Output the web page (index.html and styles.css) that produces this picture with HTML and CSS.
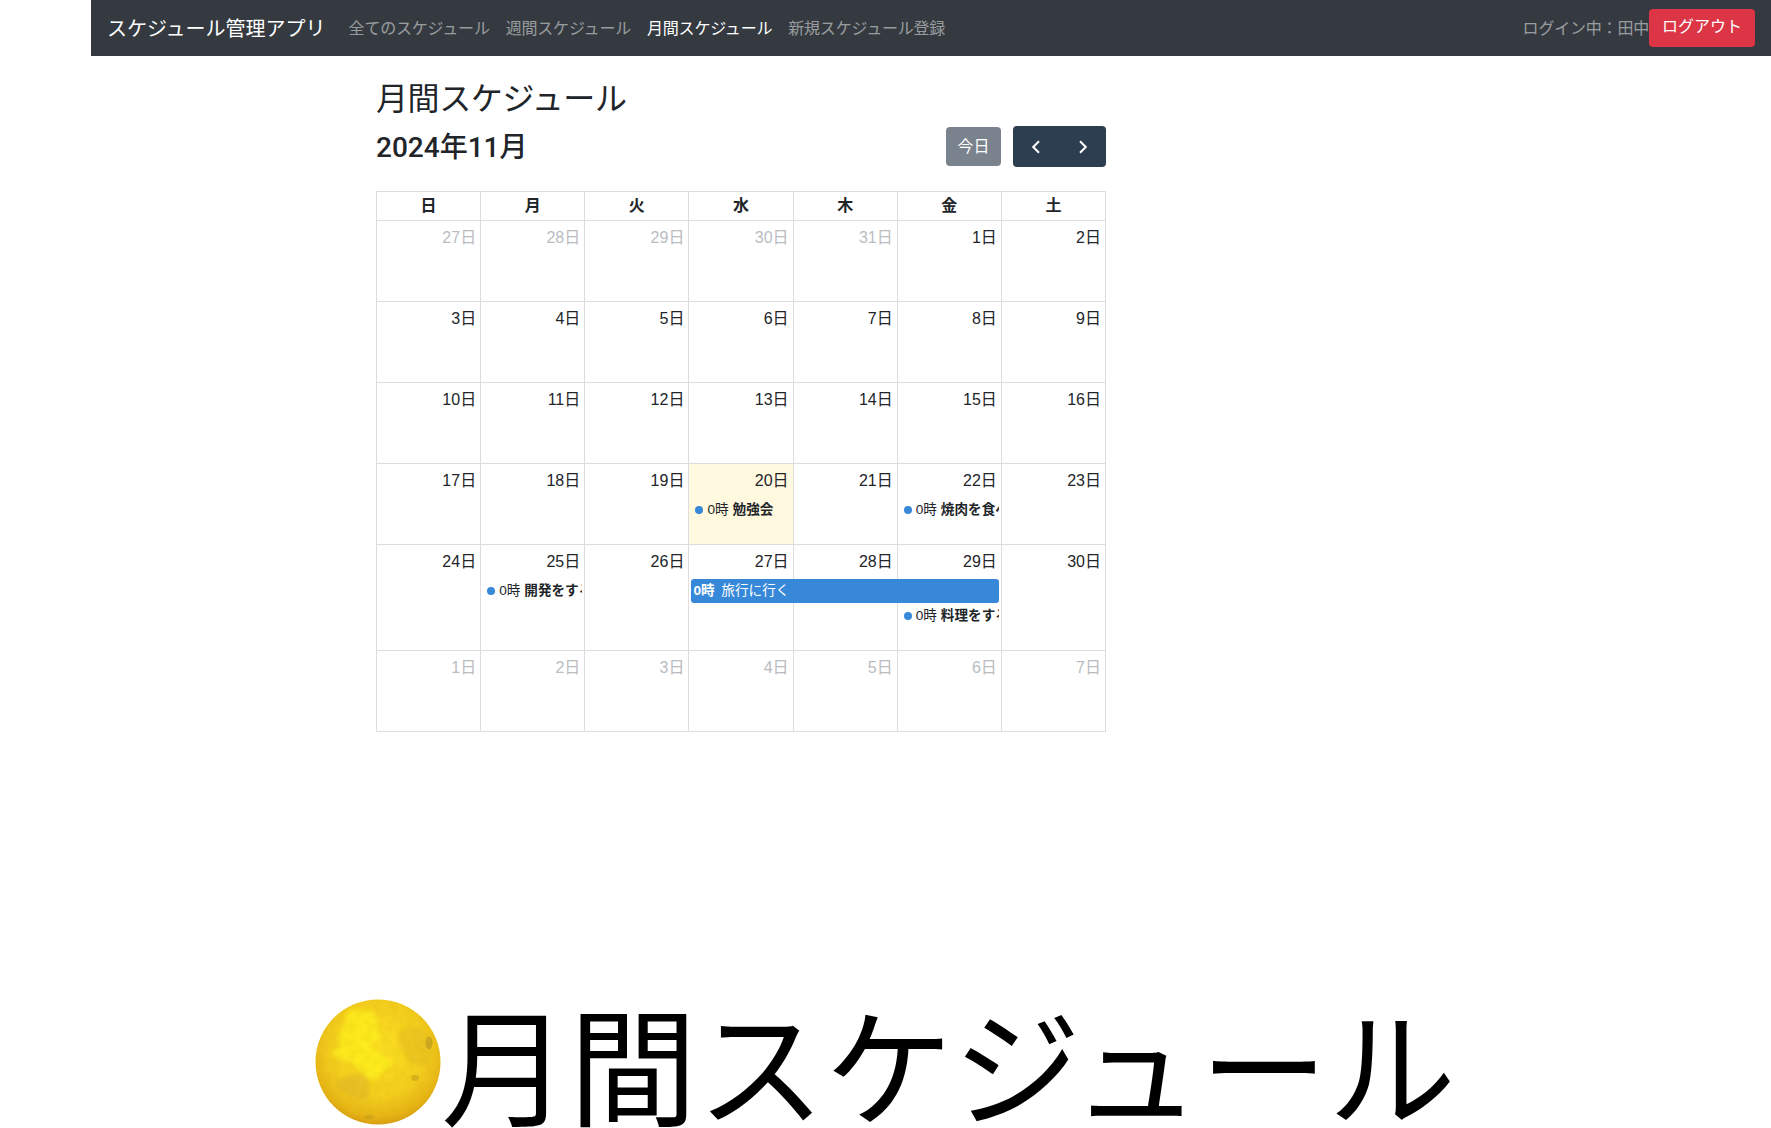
FILE: index.html
```html
<!DOCTYPE html>
<html lang="ja">
<head>
<meta charset="UTF-8" />
<title>月間スケジュール</title>
<link rel="stylesheet" href="styles.css">
</head>
<body>
<div id="main">
  <!-- ナビゲーション -->
  <nav class="navbar">
    <a class="brand">スケジュール管理アプリ</a>
    <a class="nav-link">全てのスケジュール</a>
    <a class="nav-link">週間スケジュール</a>
    <a class="nav-link active">月間スケジュール</a>
    <a class="nav-link">新規スケジュール登録</a>
    <div class="nav-right">
      <span class="login-name">ログイン中：田中</span>
      <a class="logout">ログアウト</a>
    </div>
  </nav>

  <div class="container">
    <h1 class="page-title">月間スケジュール</h1>
    <div class="toolbar">
      <h2 class="month-title">2024年11月</h2>
      <div class="toolbar-buttons">
        <button class="btn-today">今日</button>
        <div class="btn-pair">
          <button class="btn-arrow"><svg width="16" height="16" viewBox="0 0 16 16"><path d="M11 2.2 5.2 8l5.8 5.8" fill="none" stroke="#fff" stroke-width="2"/></svg></button>
          <button class="btn-arrow"><svg width="16" height="16" viewBox="0 0 16 16"><path d="M5 2.2 10.8 8 5 13.8" fill="none" stroke="#fff" stroke-width="2"/></svg></button>
        </div>
      </div>
    </div>

    <!-- カレンダー -->
    <div class="calendar">
      <div class="head">
        <div>日</div><div>月</div><div>火</div><div>水</div><div>木</div><div>金</div><div>土</div>
      </div>
      <div class="week">
        <div class="day other">27日</div><div class="day other">28日</div><div class="day other">29日</div><div class="day other">30日</div><div class="day other">31日</div><div class="day">1日</div><div class="day">2日</div>
      </div>
      <div class="week">
        <div class="day">3日</div><div class="day">4日</div><div class="day">5日</div><div class="day">6日</div><div class="day">7日</div><div class="day">8日</div><div class="day">9日</div>
      </div>
      <div class="week">
        <div class="day">10日</div><div class="day">11日</div><div class="day">12日</div><div class="day">13日</div><div class="day">14日</div><div class="day">15日</div><div class="day">16日</div>
      </div>
      <div class="week">
        <div class="day">17日</div><div class="day">18日</div><div class="day">19日</div><div class="day today">20日</div><div class="day">21日</div><div class="day">22日</div><div class="day">23日</div>
        <div class="event col4 row2"><i></i>0時 <b>勉強会</b></div>
        <div class="event col6 row2"><i></i>0時 <b>焼肉を食べる</b></div>
      </div>
      <div class="week tall">
        <div class="day">24日</div><div class="day">25日</div><div class="day">26日</div><div class="day">27日</div><div class="day">28日</div><div class="day">29日</div><div class="day">30日</div>
        <div class="event col2 row2"><i></i>0時 <b>開発をする</b></div>
        <div class="bar row2"><b>0時</b> 旅行に行く</div>
        <div class="event col6 row3"><i></i>0時 <b>料理をする</b></div>
      </div>
      <div class="week">
        <div class="day other">1日</div><div class="day other">2日</div><div class="day other">3日</div><div class="day other">4日</div><div class="day other">5日</div><div class="day other">6日</div><div class="day other">7日</div>
      </div>
    </div>
  </div>

  <!-- 下の大きいタイトル -->
  <div class="big-title">
    <svg class="moon" width="126" height="126" viewBox="0 0 126 126">
      <defs>
        <radialGradient id="moonBg" cx="50%" cy="40%" r="60%">
          <stop offset="0" stop-color="#fbdf22"/>
          <stop offset="0.65" stop-color="#f3cd1e"/>
          <stop offset="0.9" stop-color="#e6b416"/>
          <stop offset="1" stop-color="#d99f12"/>
        </radialGradient>
        <filter id="soft"><feGaussianBlur stdDeviation="2"/></filter>
        <filter id="grain">
          <feTurbulence type="fractalNoise" baseFrequency="0.12" numOctaves="3" seed="4"/>
          <feColorMatrix values="0 0 0 0 .55  0 0 0 0 .4  0 0 0 0 0  .9 0 0 0 -.32"/>
        </filter>
        <clipPath id="disc"><circle cx="63" cy="63" r="62.5"/></clipPath>
      </defs>
      <circle cx="63" cy="63" r="62.5" fill="url(#moonBg)"/>
      <g clip-path="url(#disc)">
        <g filter="url(#soft)">
          <path d="M30 14c12-6 28-4 30 2 6 8-2 14 6 20-2 8-10 4-12 12 10 2 12 12 24 12-2 10-12 10-16 20-12 2-18-8-24-16-8-6-20-2-20-12 8-4 10-10 4-14 4-8 10-10 8-24z" fill="#fff21c" opacity=".7"/>
          <path d="M20 82c8-2 22-10 28-8 8 6 8 18 4 26-8 2-16-2-20-6-6-2-10-6-12-12z" fill="#d9ae2c" opacity=".45"/>
          <path d="M84 36c6-8 18-10 24-6 6 8 10 22 6 36-6 4-14 0-20-4-6-8-12-16-10-26z" fill="#e6bc22" opacity=".55"/>
        </g>
        <rect width="126" height="126" filter="url(#grain)" opacity=".3"/>
      </g>
      <ellipse cx="114" cy="44" rx="3.5" ry="6.5" fill="#a98a20" opacity=".5"/>
      <ellipse cx="100" cy="79" rx="4" ry="3" fill="#a98a20" opacity=".4"/>
      <ellipse cx="54" cy="118" rx="5" ry="2" fill="#a98a20" opacity=".3"/>
    </svg><span>月間スケジュール</span>
  </div>
</div>
</body>
</html>
```

FILE: styles.css
```css
html, body {
    margin: 0;
    padding: 0;
    height: 100%;
    overflow: hidden;
    background: #fff;
}

body {
    font-family: "Liberation Sans", "Noto Sans CJK JP", sans-serif;
    font-size: 16px;
    color: #212529;
}

#main {
    margin-left: 91px;
}

.navbar {
    display: flex;
    align-items: center;
    height: 56px;
    padding: 0 16px;
    background: #343a40;
    box-sizing: border-box;
}

.brand {
    margin: 0 15px 2px 0;
    font-size: 20px;
    color: #fff;
}

.nav-link {
    margin-bottom: 2px;
    padding: 0 8px;
    color: rgba(255, 255, 255, .5);
    letter-spacing: -.2px;
}

.nav-link.active {
    color: #fff;
}

.nav-right {
    display: flex;
    align-items: center;
    margin-left: auto;
}

.login-name {
    margin-bottom: 2px;
    color: rgba(255, 255, 255, .5);
    letter-spacing: -.2px;
}

.logout {
    display: block;
    padding: 5px 13px 7px;
    line-height: 26px;
    color: #fff;
    background: #dc3545;
    border-radius: 4px;
}

.container {
    width: 730px;
    margin-left: 285px;
}

.page-title {
    margin: 0;
    padding-top: 22px;
    font-size: 32px;
    font-weight: 400;
    line-height: 42px;
    letter-spacing: -.4px;
}

.toolbar {
    display: flex;
    align-items: center;
    justify-content: space-between;
    height: 41px;
    margin-top: 6px;
}

.month-title {
    margin: 2px 0 0;
    font-family: Roboto, "Noto Sans CJK JP", sans-serif;
    font-size: 28px;
    font-weight: 500;
    line-height: 41px;
}

.toolbar-buttons {
    display: flex;
    align-items: center;
    gap: 12px;
}

button {
    font-family: inherit;
    font-size: 16px;
    color: #fff;
    border: 0;
    cursor: pointer;
}

.btn-today {
    width: 55px;
    height: 39px;
    padding: 0 0 3px;
    background: #7a838d;
    border-radius: 4px;
}

.btn-pair {
    display: flex;
    background: #2c3e50;
    border-radius: 4px;
}

.btn-arrow {
    display: flex;
    align-items: center;
    justify-content: center;
    width: 46.5px;
    height: 41px;
    padding: 0;
    background: none;
}

.calendar {
    margin-top: 24px;
    border-right: 1px solid #ddd;
    border-bottom: 1px solid #ddd;
}

.head {
    display: grid;
    grid-template-columns: repeat(7, minmax(0, 1fr));
    height: 29px;
}

.head div {
    border-top: 1px solid #ddd;
    border-left: 1px solid #ddd;
    font-weight: 700;
    font-size: 16px;
    line-height: 28px;
    text-align: center;
}

.week {
    display: grid;
    grid-template-columns: repeat(7, minmax(0, 1fr));
    grid-template-rows: 34px 25px 22px;
    height: 81px;
}

.week.tall {
    grid-template-rows: 34px 25px 25px 22px;
    height: 106px;
}

.day {
    grid-row: 1 / -1;
    padding: 6px 4px 0 0;
    border-top: 1px solid #ddd;
    border-left: 1px solid #ddd;
    line-height: 22px;
    text-align: right;
}

.day:nth-child(1) { grid-column: 1; }
.day:nth-child(2) { grid-column: 2; }
.day:nth-child(3) { grid-column: 3; }
.day:nth-child(4) { grid-column: 4; }
.day:nth-child(5) { grid-column: 5; }
.day:nth-child(6) { grid-column: 6; }
.day:nth-child(7) { grid-column: 7; }

.day.other {
    color: #b9bcbf;
}

.day.today {
    background: #fff9df;
}

.event {
    display: flex;
    align-items: center;
    margin: 0 2px 0 7px;
    overflow: hidden;
    font-size: 13.6px;
    line-height: 23px;
    white-space: nowrap;
}

.event i {
    flex: none;
    width: 8px;
    height: 8px;
    margin-right: 4px;
    background: #3788d8;
    border-radius: 50%;
}

.event b {
    margin-left: 4px;
}

.col2 { grid-column: 2; }
.col4 { grid-column: 4; }
.col6 { grid-column: 6; }
.row2 { grid-row: 2; }
.row3 { grid-row: 3; }

.bar {
    grid-column: 4 / 7;
    margin: 1px 2px 0 3px;
    padding-left: 2px;
    color: #fff;
    background: #3788d8;
    border-radius: 3px;
    font-size: 13.6px;
    line-height: 24px;
    white-space: nowrap;
}

.bar b {
    margin-right: 3px;
}

.big-title {
    display: flex;
    align-items: center;
    margin: 267px 0 0 224px;
    color: #000;
    font-size: 128px;
    line-height: 126px;
    white-space: nowrap;
}

.big-title span {
    font-family: "Noto Sans CJK JP", sans-serif;
}

.moon {
    flex: none;
}
```
